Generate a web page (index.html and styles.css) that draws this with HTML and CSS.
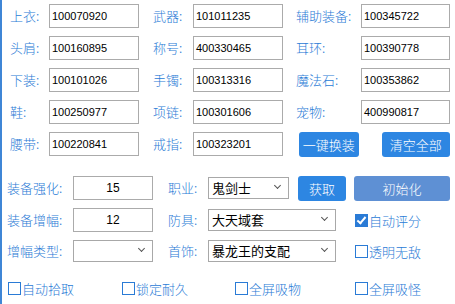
FILE: index.html
```html
<!DOCTYPE html>
<html lang="zh-CN">
<head>
    <meta charset="UTF-8">
    <title>装备助手</title>
    <link rel="stylesheet" href="styles.css">
</head>
<body>
    <div class="equip">
        <span class="label">上衣:</span>
        <div class="field">100070920</div>
        <span class="label l2">武器:</span>
        <div class="field">101011235</div>
        <span class="label l3">辅助装备:</span>
        <div class="field">100345722</div>

        <span class="label">头肩:</span>
        <div class="field">100160895</div>
        <span class="label l2">称号:</span>
        <div class="field">400330465</div>
        <span class="label l3">耳环:</span>
        <div class="field">100390778</div>

        <span class="label">下装:</span>
        <div class="field">100101026</div>
        <span class="label l2">手镯:</span>
        <div class="field">100313316</div>
        <span class="label l3">魔法石:</span>
        <div class="field">100353862</div>

        <span class="label">鞋:</span>
        <div class="field">100250977</div>
        <span class="label l2">项链:</span>
        <div class="field">100301606</div>
        <span class="label l3">宠物:</span>
        <div class="field">400990817</div>

        <span class="label">腰带:</span>
        <div class="field">100220841</div>
        <span class="label l2">戒指:</span>
        <div class="field">100323201</div>
        <div class="actions">
            <button class="btn btn-equip">一键换装</button>
            <button class="btn btn-clear">清空全部</button>
        </div>
    </div>

    <div class="options">
        <div class="row">
            <span class="label wide">装备强化:</span>
            <div class="field num">15</div>
            <span class="label mid">职业:</span>
            <div class="select short">鬼剑士<i class="arrow"></i></div>
            <button class="btn btn-get">获取</button>
            <button class="btn btn-init">初始化</button>
        </div>
        <div class="row">
            <span class="label wide">装备增幅:</span>
            <div class="field num">12</div>
            <span class="label mid">防具:</span>
            <div class="select long">大天域套<i class="arrow"></i></div>
            <label class="check on"><span class="box"></span>自动评分</label>
        </div>
        <div class="row">
            <span class="label wide">增幅类型:</span>
            <div class="select num-select"><i class="arrow"></i></div>
            <span class="label mid">首饰:</span>
            <div class="select long">暴龙王的支配<i class="arrow"></i></div>
            <label class="check"><span class="box"></span>透明无敌</label>
        </div>
        <div class="row bottom">
            <label class="check c1"><span class="box"></span>自动拾取</label>
            <label class="check c2"><span class="box"></span>锁定耐久</label>
            <label class="check c3"><span class="box"></span>全屏吸物</label>
            <label class="check c4"><span class="box"></span>全屏吸怪</label>
        </div>
    </div>
</body>
</html>
```

FILE: styles.css
```css
* {
    margin: 0;
    padding: 0;
    box-sizing: border-box;
}

body {
    width: 455px;
    height: 304px;
    background: #ffffff;
    border-left: 2px solid #3f86d6;
    font-family: "Noto Sans CJK SC", "Liberation Sans", sans-serif;
    font-size: 13px;
    font-weight: 300;
    overflow: hidden;
}

.label {
    color: #2a7bd6;
    font-size: 13px;
    line-height: 24px;
    white-space: nowrap;
}

.field {
    height: 24px;
    border: 1px solid #ababab;
    background: #fff;
    font-family: "Liberation Sans", sans-serif;
    font-weight: 400;
    font-size: 11px;
    line-height: 22px;
    padding-left: 2px;
    color: #000;
}

/* upper equipment grid */
.equip {
    display: grid;
    grid-template-columns: 39px 90px 54px 90px 78px 89px;
    grid-auto-rows: 24px;
    row-gap: 8px;
    padding: 4px 0 0 8px;
}

.equip .l2 {
    padding-left: 14px;
}

.equip .l3 {
    padding-left: 13px;
}

.actions {
    grid-column: span 2;
    display: flex;
    padding-left: 16px;
    gap: 23px;
    height: 25px;
}

.btn {
    border: none;
    border-radius: 3px;
    color: #fff;
    font-family: "Noto Sans CJK SC", sans-serif;
    font-weight: 300;
    font-size: 13px;
    height: 25px;
    cursor: pointer;
}

.btn-equip {
    width: 60px;
    background: #2d86e2;
}

.btn-clear {
    width: 69px;
    background: #2d86e2;
}

/* lower options */
.options {
    padding: 20px 0 0 5px;
}

.row {
    display: flex;
    align-items: center;
    height: 24px;
    margin-bottom: 8px;
}

.row:nth-child(2) {
    margin-bottom: 7px;
}

.row .wide {
    width: 66px;
}

.row .mid {
    width: 55px;
    padding-left: 15px;
}

.field.num {
    width: 80px;
    text-align: center;
    padding-left: 0;
    font-size: 12px;
}

.select {
    position: relative;
    height: 22px;
    border: 1px solid #a8a8a8;
    background: #fff;
    color: #000;
    font-size: 13px;
    font-weight: 400;
    line-height: 20px;
    padding-left: 3px;
}

.select.short {
    width: 81px;
}

.select.long {
    width: 128px;
}

.select.num-select {
    width: 80px;
}

.arrow {
    position: absolute;
    right: 8px;
    top: 5px;
    width: 5px;
    height: 5px;
    border-right: 1.5px solid #555;
    border-bottom: 1.5px solid #555;
    transform: rotate(45deg);
}

.btn-get {
    width: 48px;
    margin-left: 9px;
    background: #2d86e2;
}

.btn-init {
    width: 96px;
    margin-left: 8px;
    background: #5e90d4;
}

.check {
    display: flex;
    align-items: center;
    color: #2a7bd6;
    font-size: 13px;
    white-space: nowrap;
    margin-left: 19px;
}

.box {
    width: 13px;
    height: 13px;
    border: 1px solid #2a7bd6;
    margin-right: 1px;
    position: relative;
}

.check.on .box {
    background: #2a7bd6;
}

.check.on .box::after {
    content: "";
    position: absolute;
    left: 3px;
    top: 0;
    width: 3px;
    height: 7px;
    border-right: 2px solid #fff;
    border-bottom: 2px solid #fff;
    transform: rotate(40deg);
}

.row.bottom {
    margin-top: 13px;
}

.row.bottom .check {
    margin-left: 0;
}

.check.c1 {
    width: 115px;
    padding-left: 1px;
}

.check.c2 {
    width: 113px;
}

.check.c3 {
    width: 120px;
}
```
